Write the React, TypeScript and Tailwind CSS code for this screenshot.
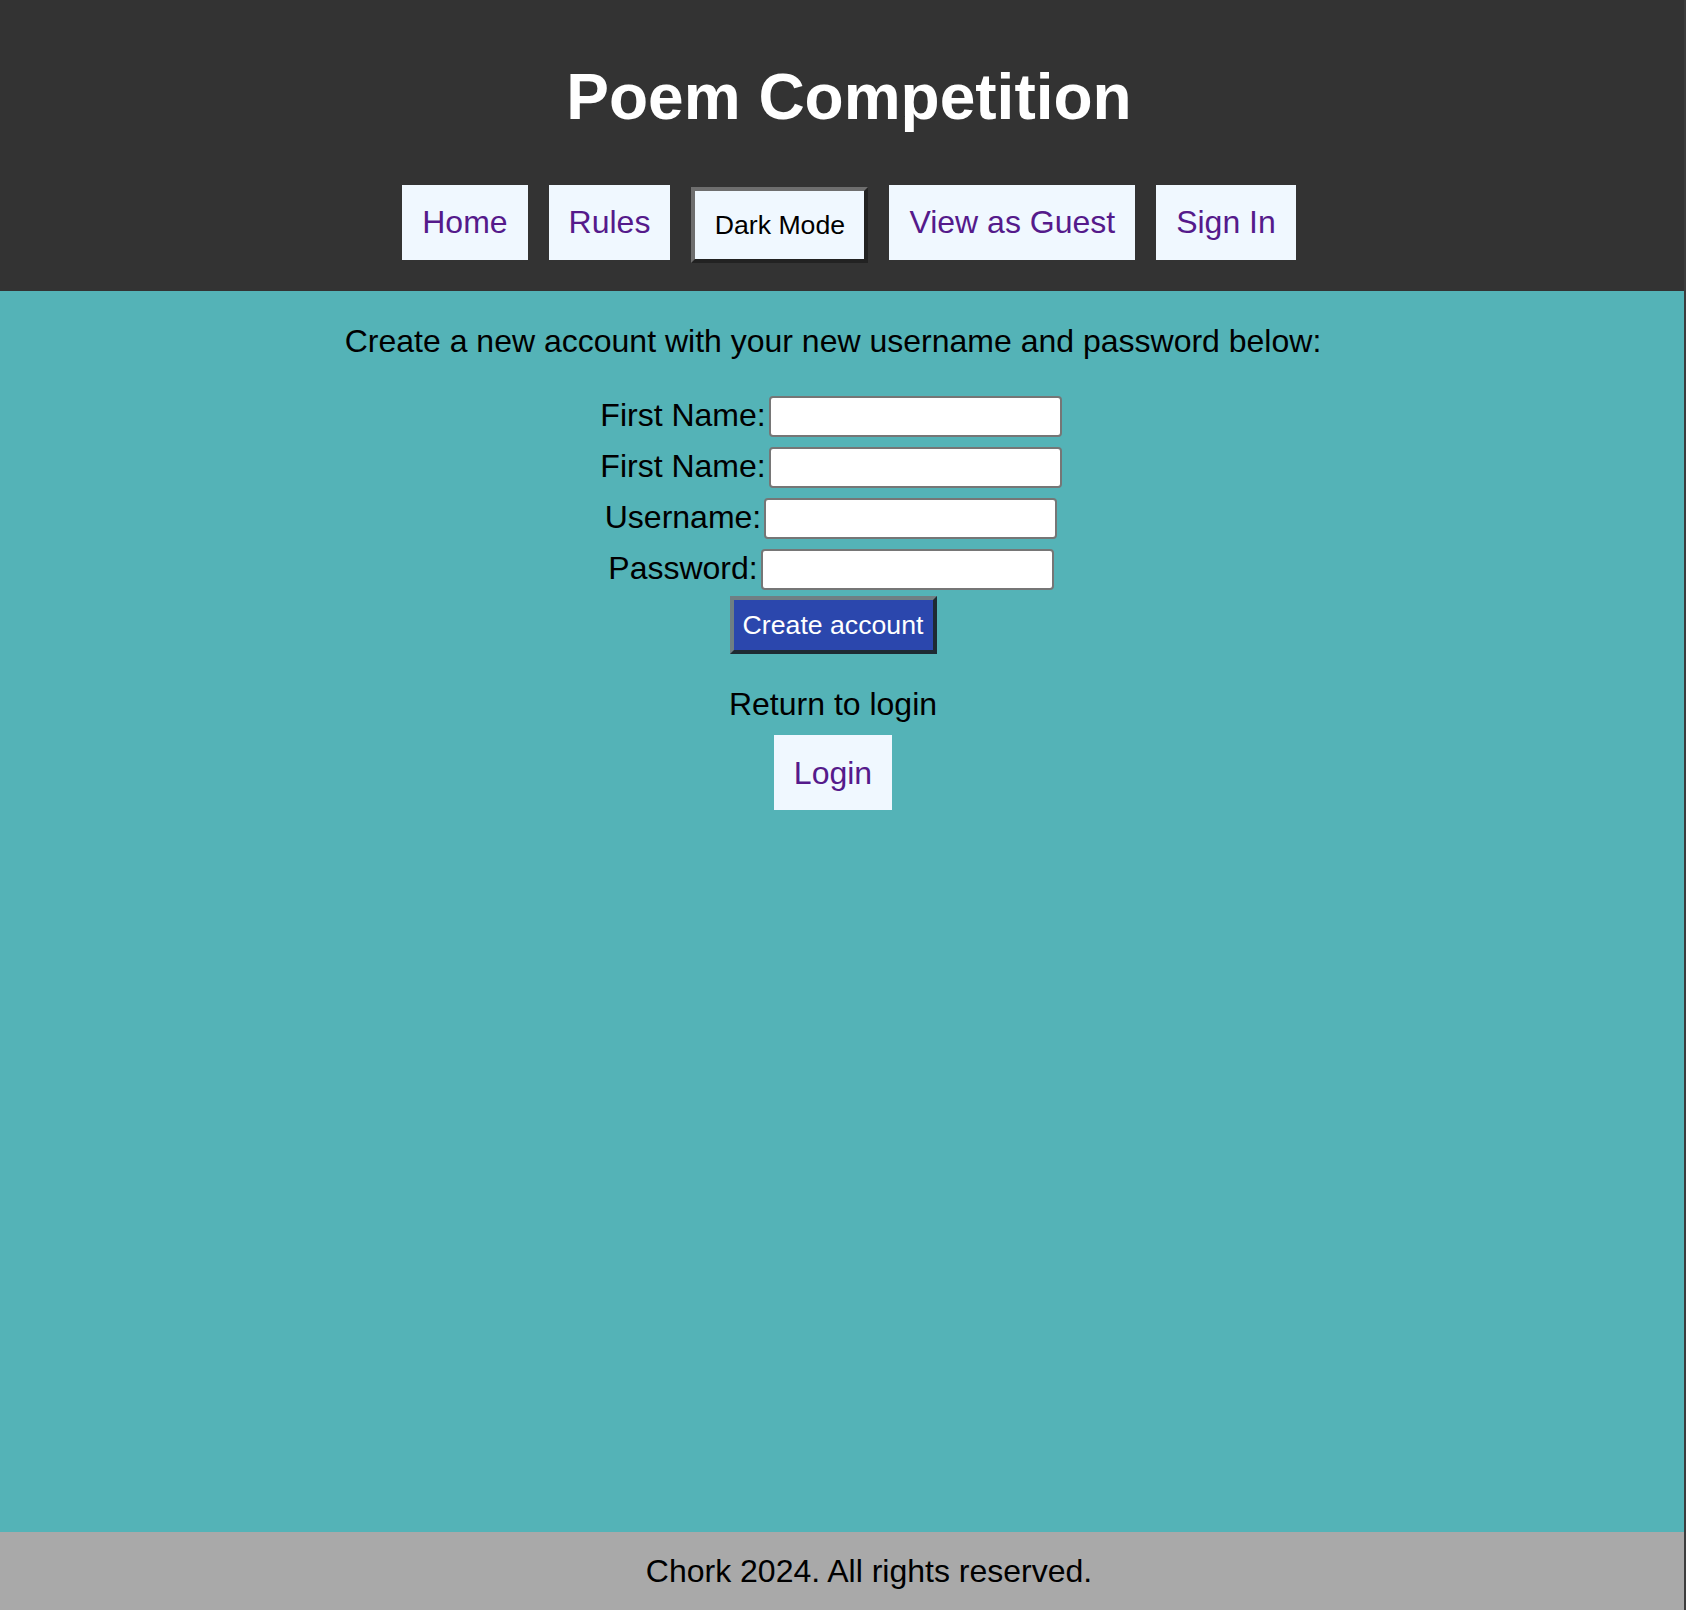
const navLinks = ["Home", "Rules"];
const navLinksAfter = ["View as Guest", "Sign In"];

function NavLink({ label }: { label: string }) {
  return (
    <a href="#" className="flex h-[75px] items-center bg-[#f0f8ff] px-[20px] text-[32px] text-[#551a8b]">
      {label}
    </a>
  );
}

function Field({ label, type = "text" }: { label: string; type?: string }) {
  return (
    <div className="flex h-[41px] items-center justify-center gap-[3px]">
      <label className="-mt-[3px] text-[32px] leading-[1.15] text-black">{label}</label>
      <input type={type} className="h-[41px] w-[293px] rounded-[4px] border-2 border-[#767676] bg-white" />
    </div>
  );
}

export default function App() {
  return (
    <div className="flex min-h-[1610px] bg-[#3c3c3c] font-['Liberation_Sans',Arial,sans-serif]">
      <div className="mr-[2px] flex flex-1 flex-col">
        <header className="flex flex-col items-center bg-[#333333] pb-[28px] pl-[14px] pt-[61px]">
          <h1 className="text-[64px] font-bold leading-[1.15] text-white">Poem Competition</h1>
          <nav className="mt-[50px] flex items-start gap-[21px]">
            {navLinks.map((l) => (
              <NavLink key={l} label={l} />
            ))}
            <button className="mt-[2px] h-[76px] w-[177px] border-4 border-b-[#222222] border-l-[#6e6e6e] border-r-[#222222] border-t-[#6e6e6e] bg-[#f0f8ff] text-[26.67px] text-black">
              Dark Mode
            </button>
            {navLinksAfter.map((l) => (
              <NavLink key={l} label={l} />
            ))}
          </nav>
        </header>

        <main className="flex flex-1 flex-col items-center bg-[#54b3b7] pr-[18px]">
          <p className="mt-[32px] text-[32px] leading-[1.15] text-black">
            Create a new account with your new username and password below:
          </p>
          <form className="mt-[37px] flex flex-col items-center gap-[10px] pr-[4px]">
            <Field label="First Name:" />
            <Field label="First Name:" />
            <Field label="Username:" />
            <Field label="Password:" type="password" />
          </form>
          <button className="mt-[6px] h-[58px] w-[207px] border-4 border-b-[#1e2b33] border-l-[#6f7f84] border-r-[#1e2b33] border-t-[#6f7f84] bg-[#2b47ad] text-[26.67px] text-white">
            Create account
          </button>
          <p className="mt-[32px] text-[32px] leading-[1.15] text-black">Return to login</p>
          <a href="#" className="mt-[12px] flex h-[75px] items-center bg-[#f0f8ff] px-[20px] text-[32px] text-[#551a8b]">
            Login
          </a>
        </main>

        <footer className="flex h-[78px] items-center justify-center bg-[#a9a9a9] pl-[54px]">
          <p className="text-[32px] leading-[1.15] text-black">Chork 2024. All rights reserved.</p>
        </footer>
      </div>
    </div>
  );
}
